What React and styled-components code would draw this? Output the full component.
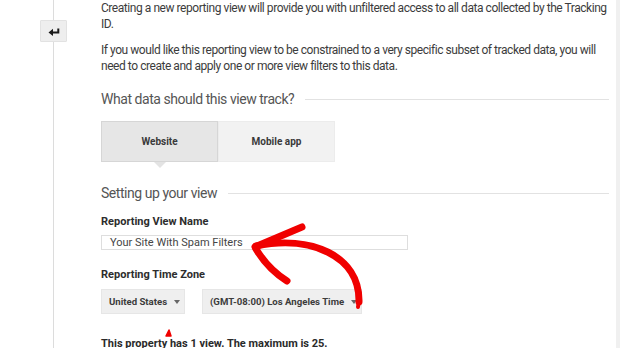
import React from "react";
import styled, { createGlobalStyle } from "styled-components";

const GlobalStyle = createGlobalStyle`
    html, body {
        margin: 0;
        padding: 0;
        background: #fff;
        overflow: hidden;
    }
    body {
        font-family: Roboto, "Liberation Sans", Arial, sans-serif;
        color: #333;
    }
`;

const Page = styled.div`
    position: relative;
    display: flex;
    width: 620px;
    height: 348px;
    overflow: hidden;
`;

const Rail = styled.div`
    position: relative;
    width: 101px;
    flex: none;
    padding-top: 20px;
    box-sizing: border-box;

    &::before {
        content: "";
        position: absolute;
        top: 0;
        bottom: 0;
        left: 53px;
        width: 1px;
        background: #dcdcdc;
    }
`;

const BackButton = styled.button`
    position: relative;
    display: flex;
    align-items: center;
    justify-content: center;
    margin-left: 40px;
    width: 27px;
    height: 22px;
    padding: 0;
    background: #eeeeee;
    border: 1px solid #e2e2e2;
    border-radius: 1px;
    cursor: pointer;
`;

const Main = styled.div`
    flex: 1;
    display: flex;
    flex-direction: column;
    padding-top: 1px;
    padding-right: 2px;
`;

const Scrollbar = styled.div`
    width: 4px;
    flex: none;
    background: #f0f0f0;
`;

const Para = styled.p`
    margin: 0 0 11px;
    font-size: 12px;
    letter-spacing: -0.45px;
    line-height: 15.5px;
    color: #3c3c3c;
`;

const SectionTitle = styled.div`
    display: flex;
    align-items: center;
    gap: 11px;
    margin-top: ${(p) => p.$top}px;
    margin-right: 5px;
    font-size: 14px;
    letter-spacing: -0.45px;
    line-height: 20px;
    color: #555;

    &::after {
        content: "";
        flex: 1;
        height: 1px;
        background: #e2e2e2;
    }
`;

const Tabs = styled.div`
    display: flex;
    margin-top: 12px;
    width: 234px;
`;

const Tab = styled.div`
    position: relative;
    flex: 1;
    height: 41px;
    display: flex;
    align-items: center;
    justify-content: center;
    box-sizing: border-box;
    font-size: 10px;
    font-weight: 700;
    color: #3a3a3a;
    background: ${(p) => (p.$active ? "#e6e6e6" : "#f2f2f2")};
    border: 1px solid ${(p) => (p.$active ? "#d6d6d6" : "#ececec")};

    &::after {
        content: "";
        display: ${(p) => (p.$active ? "block" : "none")};
        position: absolute;
        left: 50%;
        bottom: -7px;
        margin-left: -6px;
        border-left: 6px solid transparent;
        border-right: 6px solid transparent;
        border-top: 6px solid #e3e3e3;
    }
`;

const Label = styled.div`
    margin-top: ${(p) => p.$top}px;
    font-size: 11px;
    line-height: 15px;
    font-weight: 700;
    color: #2d2d2d;
`;

const TextInput = styled.div`
    margin-top: 6px;
    width: 307px;
    height: 24px;
    box-sizing: border-box;
    padding: 0 8px;
    display: flex;
    align-items: center;
    border: 1px solid #dedede;
    font-size: 11px;
    color: #454545;
    background: #fff;
`;

const SelectRow = styled.div`
    display: flex;
    gap: 17px;
    margin-top: 7px;
`;

const Select = styled.div`
    width: ${(p) => p.$width}px;
    height: 25px;
    box-sizing: border-box;
    display: flex;
    align-items: center;
    gap: 7px;
    padding: 0 7px;
    white-space: nowrap;
    background: #efefef;
    border: 1px solid #e6e6e6;
    font-size: 9.6px;
    font-weight: 700;
    color: #3c3c3c;
`;

const Caret = styled.span`
    width: 0;
    height: 0;
    border-left: 3.5px solid transparent;
    border-right: 3.5px solid transparent;
    border-top: 4px solid #666;
`;

const Footnote = styled.div`
    margin-top: 22px;
    font-size: 11px;
    line-height: 15px;
    font-weight: 700;
    color: #2a2a2a;
`;

const Annotation = styled.svg`
    position: absolute;
    left: 0;
    top: 0;
    pointer-events: none;
`;

const BackIcon = () => (
    <svg width="12" height="9" viewBox="0 0 12 9">
        <path d="M0.5 5.5 L5 1.8 V9 Z" fill="#1a1a1a" />
        <path d="M4 5.5 H10.3 V1.5" fill="none" stroke="#1a1a1a" strokeWidth="2" />
    </svg>
);

const App = () => {
    return (
        <>
            <GlobalStyle />
            <Page>
                <Rail>
                    <BackButton aria-label="Back">
                        <BackIcon />
                    </BackButton>
                </Rail>
                <Main>
                    <Para>
                        Creating a new reporting view will provide you with unfiltered access to all data collected by the Tracking ID.
                    </Para>
                    <Para>
                        If you would like this reporting view to be constrained to a very specific subset of tracked data, you will need to create and apply one or more view filters to this data.
                    </Para>
                    <SectionTitle $top={4}>What data should this view track?</SectionTitle>
                    <Tabs>
                        <Tab $active>Website</Tab>
                        <Tab>Mobile app</Tab>
                    </Tabs>
                    <SectionTitle $top={21}>Setting up your view</SectionTitle>
                    <Label $top={11}>Reporting View Name</Label>
                    <TextInput>Your Site With Spam Filters</TextInput>
                    <Label $top={17}>Reporting Time Zone</Label>
                    <SelectRow>
                        <Select $width={84}>
                            United States <Caret />
                        </Select>
                        <Select $width={160}>
                            (GMT-08:00) Los Angeles Time <Caret />
                        </Select>
                    </SelectRow>
                    <Footnote>This property has 1 view. The maximum is 25.</Footnote>
                </Main>
                <Scrollbar />
                <Annotation width="620" height="348" viewBox="0 0 620 348">
                    <g fill="none" stroke="#f00000" strokeLinecap="round" strokeLinejoin="round">
                        <path d="M302 227 L255 247" strokeWidth="7" />
                        <path d="M256 249 Q268 269 287 281" strokeWidth="7" />
                        <path d="M256 246 C310 235 360 255 359 302" strokeWidth="7" />
                        <path d="M359 300 L358 307" strokeWidth="4" />
                        <path d="M166 336 L169 330 L171 336 Z" fill="#f00000" strokeWidth="1.5" />
                    </g>
                </Annotation>
            </Page>
        </>
    );
};

export default App;
